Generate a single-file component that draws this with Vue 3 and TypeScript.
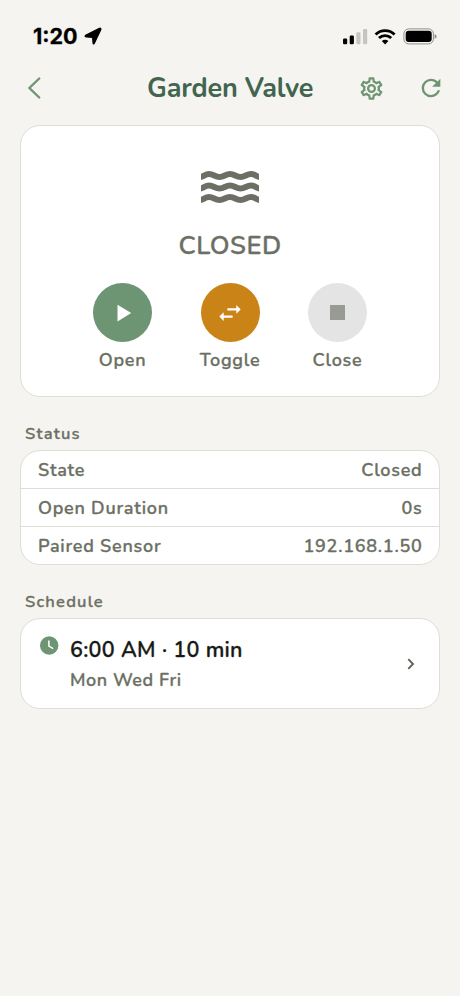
<script setup lang="ts">
interface Row { label: string; value: string }
const rows: Row[] = [
  { label: 'State', value: 'Closed' },
  { label: 'Open Duration', value: '0s' },
  { label: 'Paired Sensor', value: '192.168.1.50' },
]
</script>

<template>
  <div class="screen">
    <div class="statusbar">
      <span class="time">1:20</span>
      <svg class="loc" width="19" height="19" viewBox="0 0 19 19"><path d="M1.6 8.4 L15 1.6 Q17.6 .5 16.6 3 L10.3 16.3 Q9.5 17.8 9.1 16 L8.6 10.3 L2.6 9.9 Q.3 9.4 1.6 8.4Z" fill="#000" stroke="#000" stroke-width="1.300" stroke-linejoin="round" /></svg>
      <span class="grow"></span>
      <svg class="signals" width="94" height="18" viewBox="0 0 94 18">
        <rect x="0" y="10.5" width="4.200" height="5.7" rx="1.2" />
        <rect x="6.7" y="7.5" width="4.200" height="8.7" rx="1.2" />
        <rect x="13.3" y="4.3" width="4.200" height="11.9" rx="1.2" fill="#c6c5c2" />
        <rect x="20" y="1" width="4.200" height="15.2" rx="1.2" fill="#c6c5c2" />
        <g fill="none" stroke="#000" stroke-width="2.8"><path d="M32.6 6.5a13.6 13.6 0 0 1 19 0" /><path d="M36 10.1a8.6 8.6 0 0 1 12.2 0" /></g>
        <path d="M38.8 13a4.7 4.7 0 0 1 6.6 0L42.1 16.4Z" />
        <rect x="60.9" y=".9" width="29.500" height="15" rx="4.8" fill="none" stroke="#8f8e8c" />
        <rect x="62.7" y="2.7" width="26" height="11.400" rx="3" />
        <path d="M91.6 6q2 .8 2 2.4t-2 2.4z" fill="#8f8e8c" />
      </svg>
    </div>

    <header class="header">
      <svg class="back" width="14" height="22" viewBox="0 0 14 22"><path d="M12.2 1.5 2.4 11l9.8 9.5" fill="none" stroke="#6d9573" stroke-width="2.300" stroke-linecap="round" /></svg>
      <h1>Garden Valve</h1>
      <svg class="gear" width="27" height="27" viewBox="0 0 24 24"><path d="M12,8A4,4 0 0,1 16,12A4,4 0 0,1 12,16A4,4 0 0,1 8,12A4,4 0 0,1 12,8M12,10A2,2 0 0,0 10,12A2,2 0 0,0 12,14A2,2 0 0,0 14,12A2,2 0 0,0 12,10M10,22C9.75,22 9.54,21.82 9.5,21.58L9.13,18.93C8.5,18.68 7.96,18.34 7.44,17.94L4.95,18.95C4.73,19.03 4.46,18.95 4.34,18.73L2.34,15.27C2.21,15.05 2.27,14.78 2.46,14.63L4.57,12.97L4.5,12L4.57,11L2.46,9.37C2.27,9.22 2.21,8.95 2.34,8.73L4.34,5.27C4.46,5.05 4.73,4.96 4.95,5.05L7.44,6.05C7.96,5.66 8.5,5.32 9.13,5.07L9.5,2.42C9.54,2.18 9.75,2 10,2H14C14.25,2 14.46,2.18 14.5,2.42L14.87,5.07C15.5,5.32 16.04,5.66 16.56,6.05L19.05,5.05C19.27,4.96 19.54,5.05 19.66,5.27L21.66,8.73C21.79,8.95 21.73,9.22 21.54,9.37L19.43,11L19.5,12L19.43,13L21.54,14.63C21.73,14.78 21.79,15.05 21.66,15.27L19.66,18.73C19.54,18.95 19.27,19.04 19.05,18.95L16.56,17.95C16.04,18.34 15.5,18.68 14.87,18.93L14.5,21.58C14.46,21.82 14.25,22 14,22H10M11.25,4L10.88,6.61C9.68,6.86 8.62,7.5 7.85,8.39L5.44,7.35L4.69,8.65L6.8,10.2C6.4,11.37 6.4,12.64 6.8,13.8L4.68,15.36L5.43,16.66L7.86,15.62C8.63,16.5 9.68,17.14 10.87,17.38L11.24,20H12.76L13.13,17.39C14.32,17.14 15.37,16.5 16.14,15.62L18.57,16.66L19.32,15.36L17.2,13.81C17.6,12.64 17.6,11.37 17.2,10.2L19.31,8.65L18.56,7.35L16.15,8.39C15.38,7.5 14.32,6.86 13.12,6.62L12.75,4H11.25Z" fill="#6d9573" /></svg>
      <svg class="refresh" width="28" height="28" viewBox="0 0 24 24"><path d="M17.65,6.35C16.2,4.9 14.21,4 12,4A8,8 0 0,0 4,12A8,8 0 0,0 12,20C15.73,20 18.84,17.45 19.73,14H17.65C16.83,16.33 14.61,18 12,18A6,6 0 0,1 6,12A6,6 0 0,1 12,6C13.66,6 15.14,6.69 16.22,7.78L13,11H20V4L17.65,6.35Z" fill="#6d9573" /></svg>
    </header>

    <section class="card hero">
      <svg class="waves" width="58" height="34" viewBox="0 0 58 34">
        <g fill="none" stroke="#6c7064" stroke-width="6">
          <path d="M-2.500 7.200C2.500 7.200 3.500 4 8 4S14 7 18.500 7 24.500 4 29 4 35 7 39.500 7 45.500 4 50 4 55.500 7.200 60.500 7.200" />
          <path d="M-2.500 18.700C2.500 18.700 3.500 15.500 8 15.500S14 18.500 18.500 18.500 24.500 15.500 29 15.500 35 18.500 39.500 18.500 45.500 15.500 50 15.500 55.500 18.700 60.500 18.700" />
          <path d="M-2.500 30.200C2.500 30.200 3.500 27 8 27S14 30 18.500 30 24.500 27 29 27 35 30 39.500 30 45.500 27 50 27 55.500 30.200 60.500 30.200" />
        </g>
      </svg>
      <div class="state">CLOSED</div>
      <div class="actions">
        <div class="action"><button class="circle green"><svg width="28" height="28" viewBox="0 0 28 28"><path d="M8.500 5.800v16.700L22.200 14.100z" fill="#fff" /></svg></button><span>Open</span></div>
        <div class="action"><button class="circle amber"><svg width="28" height="28" viewBox="0 0 28 28"><path d="M24.700 10.400L20.300 6V9.200H11.400V11.600H20.300V14.800M7.700 13.200L3.300 17.600L7.700 22V18.800H16.600V16.400H7.700V13.200Z" fill="#fff" /></svg></button><span>Toggle</span></div>
        <div class="action"><button class="circle gray"><i></i></button><span>Close</span></div>
      </div>
    </section>

    <h2>Status</h2>
    <section class="card table">
      <div v-for="r in rows" :key="r.label" class="row"><span>{{ r.label }}</span><span>{{ r.value }}</span></div>
    </section>

    <h2>Schedule</h2>
    <section class="card sched">
      <svg class="clock" width="19" height="19" viewBox="0 0 19 19"><circle cx="9.200" cy="9.500" r="9.200" fill="#6d9573" /><path d="M8.900 4.500v5.600l4.300 2.600" fill="none" stroke="#fff" stroke-width="1.500" /></svg>
      <div class="info"><div class="when">6:00 AM · 10 min</div><div class="days">Mon Wed Fri</div></div>
      <svg class="chev" width="8" height="12" viewBox="0 0 8 12"><path d="M1.300 1.200 6 6l-4.700 4.800" fill="none" stroke="#5f6258" stroke-width="1.900" /></svg>
    </section>
  </div>
</template>

<style>
body { background: #f6f4f0; }
</style>
<style scoped>
* { box-sizing: border-box; }
.screen { width: 460px; height: 996px; background: #f6f4f0; font-family: Nunito, Lato, "Open Sans", sans-serif; color: #6c7064; font-weight: 600; -webkit-text-stroke: .3px currentColor; overflow: hidden; display: flex; flex-direction: column; }
.statusbar { height: 66px; padding: 27px 23px 0 33px; display: flex; align-items: flex-start; }
.time { font: 700 21.500px/19px Inter, sans-serif; color: #000; width: 51px; white-space: nowrap; }
.grow { flex: 1; }
.signals { margin-top: .500px; }
.header { height: 44px; display: flex; align-items: center; padding: 0 15px 0 27px; }
h1 { margin: 2px 0 0 106px; width: 211px; font-size: 27px; line-height: 44px; font-weight: 700; color: #41654f; white-space: nowrap; letter-spacing: -.17px; -webkit-text-stroke: 0; }
.gear { flex: none; }
.refresh { margin-left: 32px; flex: none; }
.card { margin: 0 20px; background: #fff; border: 1px solid #dcded8; border-radius: 20px; }
.hero { margin-top: 15px; height: 272px; display: flex; flex-direction: column; align-items: center; flex: none; }
.waves { margin-top: 44px; flex: none; }
.state { margin-top: 24px; font-size: 25.500px; line-height: 36px; letter-spacing: .5px; }
.actions { margin-top: 19px; display: flex; gap: 48.500px; }
.action { width: 59px; display: flex; flex-direction: column; align-items: center; font-size: 18px; line-height: 24px; white-space: nowrap; }
.action span { margin-top: 6px; letter-spacing: .75px; }
.circle { width: 59px; height: 59px; border: 0; padding: 0; border-radius: 50%; display: flex; align-items: center; justify-content: center; }
.green { background: #6d9573; }
.amber { background: #c98316; }
.gray { background: #e4e4e4; }
.gray i { width: 15px; height: 15px; background: #989b94; }
h2 { margin: 26px 0 0 25px; font-size: 16.500px; line-height: 22px; height: 22px; font-weight: 600; letter-spacing: 1.200px; flex: none; }
.table { margin-top: 5px; height: 115px; flex: none; overflow: hidden; }
.row { height: 38px; padding: 0 16.500px 0 17px; display: flex; justify-content: space-between; align-items: center; font-size: 18px; line-height: 24px; letter-spacing: .75px; border-bottom: 1px solid #dcded8; }
.row:last-child { border-bottom: 0; }
.sched { margin-top: 5px; height: 91px; display: flex; flex: none; padding: 0 24px 0 19px; }
.clock { margin-top: 17px; }
.info { margin: 17px 0 0 11px; flex: 1; white-space: nowrap; }
.when { font-size: 21.500px; line-height: 28px; color: #171a14; letter-spacing: .3px; }
.days { margin-top: 3px; font-size: 18px; line-height: 26px; letter-spacing: .55px; }
.chev { align-self: center; }
</style>
